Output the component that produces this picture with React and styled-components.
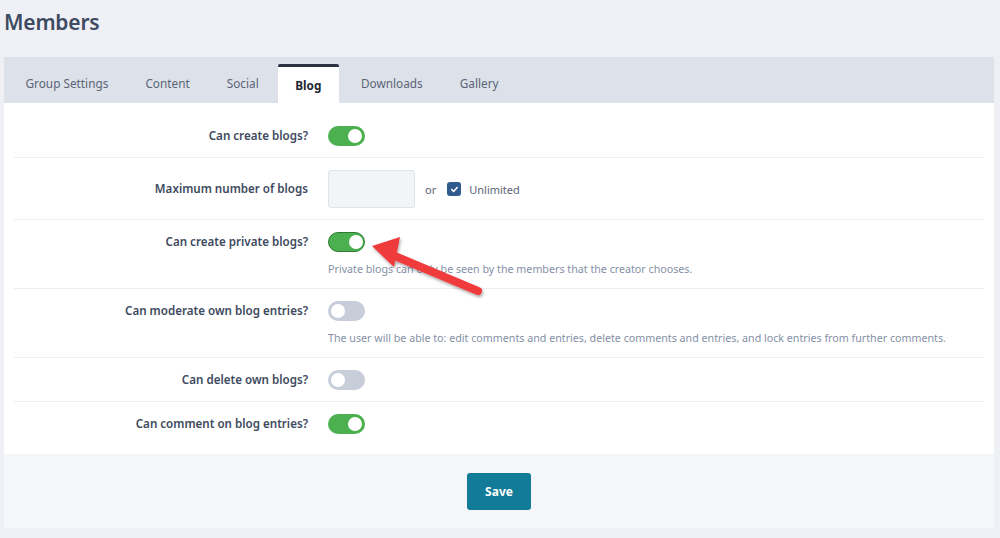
import React from 'react';
import styled, { createGlobalStyle } from 'styled-components';

const Global = createGlobalStyle`
  html, body { margin: 0; padding: 0; background: #eef0f5; }
  body { font-family: "Noto Sans", "Open Sans", sans-serif; color: #3e4a5e; }
`;

const Page = styled.div`
  position: relative;
  width: 1000px;
  height: 538px;
  padding: 0 6px 0 4px;
  box-sizing: border-box;
  overflow: hidden;
`;

const Title = styled.h1`
  margin: 0;
  padding: 8px 0 0 0;
  height: 57px;
  box-sizing: border-box;
  font-size: 21px;
  font-weight: 600;
  color: #3e4b61;
  letter-spacing: -0.2px;
`;

const Panel = styled.div`
  background: #fff;
`;

const TabBar = styled.div`
  display: flex;
  align-items: flex-end;
  height: 46px;
  padding-left: 3px;
  background: #dde1e9;
`;

const Tab = styled.div`
  height: ${p => (p.$active ? '39px' : '42px')};
  display: flex;
  align-items: center;
  padding: ${p => (p.$active ? '0 18px 0 17px' : '2px 18.5px 0')};
  margin: ${p => (p.$active ? '0 3px 0 1px' : '0')};
  font-size: 11.8px;
  font-weight: ${p => (p.$active ? 700 : 400)};
  color: ${p => (p.$active ? '#1f2733' : '#5b6577')};
  background: ${p => (p.$active ? '#fff' : 'transparent')};
  border-top: ${p => (p.$active ? '3px solid #2b3342' : 'none')};
  border-radius: 2px 2px 0 0;
  box-sizing: border-box;
`;

const Content = styled.div`
  padding: 11px 10px 9px 10px;
`;

const Row = styled.div`
  display: grid;
  grid-template-columns: 294px 1fr;
  align-items: start;
  column-gap: 20px;
  padding: 12px 0 11px;
  border-bottom: ${p => (p.$last ? 'none' : '1px solid #eceef3')};
`;

const Label = styled.div`
  min-height: ${p => (p.$tall ? '36px' : '18px')};
  display: flex;
  align-items: center;
  justify-content: flex-end;
  font-size: 11.6px;
  font-weight: 600;
  color: #3e4a5e;
`;

const Field = styled.div`
  display: flex;
  flex-direction: column;
  gap: 9px;
`;

const Toggle = styled.div`
  position: relative;
  width: 37px;
  height: 20px;
  border-radius: 10px;
  box-sizing: border-box;
  background: ${p => (p.$on ? '#4caf50' : '#c7cdd9')};
  border: ${p => (p.$outlined ? '1.5px solid #2f7d33' : 'none')};
  &::after {
    content: '';
    position: absolute;
    top: ${p => (p.$outlined ? '1.5px' : '3px')};
    left: ${p => (p.$on ? 'auto' : '3px')};
    right: ${p => (p.$on ? (p.$outlined ? '1.5px' : '3px') : 'auto')};
    width: 14px;
    height: 14px;
    border-radius: 50%;
    background: #fff;
  }
`;

const Desc = styled.div`
  font-size: 10.7px;
  line-height: 16px;
  color: #8590a6;
`;

const Inline = styled.div`
  display: flex;
  align-items: center;
  gap: 10px;
  font-size: 11px;
  color: #5b6577;
`;

const NumberBox = styled.div`
  width: 87px;
  height: 38px;
  box-sizing: border-box;
  background: #f2f4f8;
  border: 1px solid #dfe3ea;
  border-radius: 3px;
`;

const Check = styled.span`
  display: inline-flex;
  align-items: center;
  justify-content: center;
  width: 14px;
  height: 14px;
  border-radius: 3px;
  background: #2f5b8f;
  margin-left: 1px;
  margin-right: -2px;
`;

const Footer = styled.div`
  display: flex;
  justify-content: center;
  padding: 19px 0 18px;
  background: #f5f6f9;
`;

const SaveButton = styled.button`
  width: 64px;
  height: 37px;
  border: none;
  border-radius: 3px;
  background: #127b97;
  color: #fff;
  font-family: inherit;
  font-size: 12px;
  font-weight: 700;
`;

const Arrow = styled.svg`
  position: absolute;
  left: 360px;
  top: 233px;
  overflow: visible;
`;

const rows = [
  { label: 'Can create blogs?', on: true },
  { label: 'Maximum number of blogs', input: true },
  {
    label: 'Can create private blogs?',
    on: true,
    outlined: true,
    desc: 'Private blogs can only be seen by the members that the creator chooses.',
  },
  {
    label: 'Can moderate own blog entries?',
    on: false,
    desc: 'The user will be able to: edit comments and entries, delete comments and entries, and lock entries from further comments.',
  },
  { label: 'Can delete own blogs?', on: false },
  { label: 'Can comment on blog entries?', on: true },
];

const tabs = ['Group Settings', 'Content', 'Social', 'Blog', 'Downloads', 'Gallery'];

export default function App() {
  return (
    <Page>
      <Global />
      <Title>Members</Title>
      <Panel>
        <TabBar>
          {tabs.map(t => (
            <Tab key={t} $active={t === 'Blog'}>{t}</Tab>
          ))}
        </TabBar>
        <Content>
          {rows.map((r, i) => (
            <Row key={r.label} $last={i === rows.length - 1}>
              <Label $tall={r.input}>{r.label}</Label>
              {r.input ? (
                <Inline>
                  <NumberBox />
                  <span>or</span>
                  <Check>
                    <svg width="9" height="9" viewBox="0 0 10 10">
                      <path d="M2 5.2l2 2 4-4.4" fill="none" stroke="#fff" strokeWidth="1.8" strokeLinecap="round" strokeLinejoin="round" />
                    </svg>
                  </Check>
                  <span>Unlimited</span>
                </Inline>
              ) : (
                <Field>
                  <Toggle $on={r.on} $outlined={r.outlined} />
                  {r.desc && <Desc>{r.desc}</Desc>}
                </Field>
              )}
            </Row>
          ))}
        </Content>
        <Footer>
          <SaveButton>Save</SaveButton>
        </Footer>
      </Panel>
      <Arrow width="130" height="70" viewBox="0 0 130 70">
        <defs>
          <filter id="sh" x="-20%" y="-20%" width="140%" height="160%">
            <feDropShadow dx="1" dy="2" stdDeviation="1.5" floodColor="#000" floodOpacity="0.35" />
          </filter>
        </defs>
        <g filter="url(#sh)">
          <line x1="118" y1="58" x2="30" y2="21" stroke="#ef3b3b" strokeWidth="8" strokeLinecap="round" />
          <polygon points="12,13 40,4 34,34" fill="#ef3b3b" />
        </g>
      </Arrow>
    </Page>
  );
}
